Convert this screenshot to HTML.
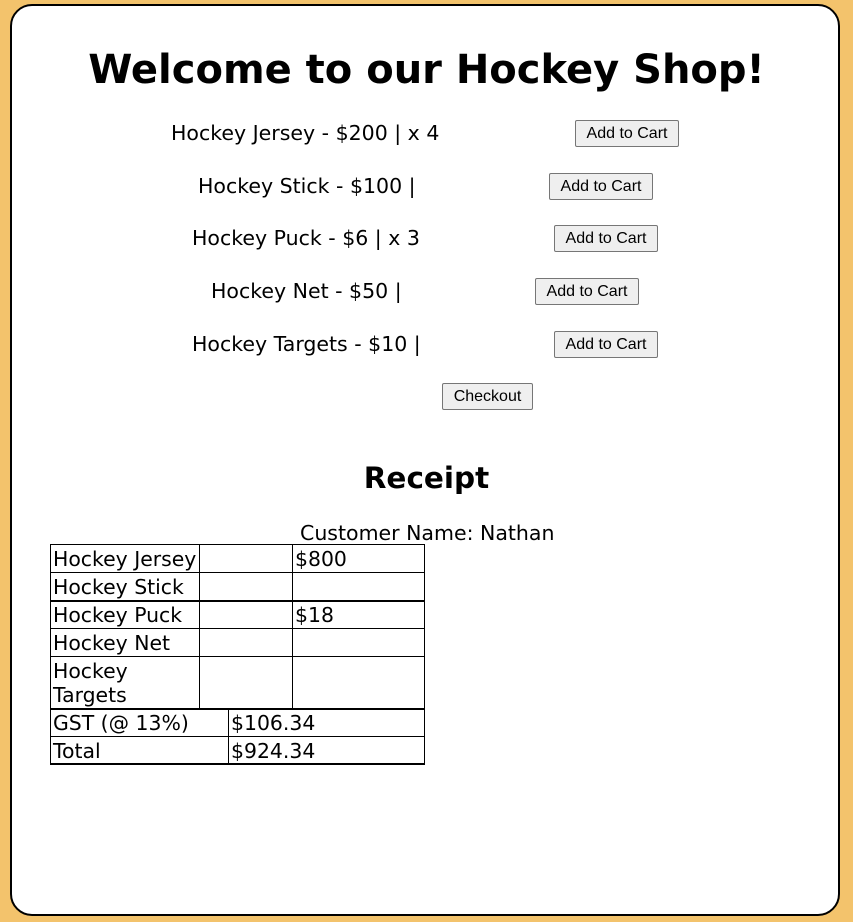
<!DOCTYPE html>
<html><head><style>
*{margin:0;padding:0;box-sizing:border-box}
body{width:853px;height:922px;background:#f3c36c;position:relative;overflow:hidden;font-family:"DejaVu Sans",Verdana,sans-serif;color:#000}
.card{position:absolute;left:10px;top:4px;width:830px;height:912px;background:#fff;border:2px solid #000;border-radius:22px}
.a{position:absolute;white-space:nowrap}
h1{position:absolute;left:0;width:853px;top:45px;text-align:center;font-size:40px;font-weight:bold;line-height:50px}
.t{font-size:20.5px;line-height:24px}
.btn{position:absolute;height:27px;background:#efefef;border:1px solid #767676;border-radius:2px;font-family:"Liberation Sans",Arial,sans-serif;font-size:16px;line-height:25px;text-align:center;color:#000}
.c{position:absolute;border:1px solid #000;font-size:20.4px;line-height:24px;padding-left:2px;padding-top:2px;white-space:nowrap}
</style></head><body>
<div class="card"></div>
<h1>Welcome to our Hockey Shop!</h1>
<div class="a t" style="left:171px;top:121px">Hockey Jersey - $200 | x 4</div>
<div class="btn" style="left:575px;top:120px;width:104px">Add to Cart</div>
<div class="a t" style="left:198px;top:174px">Hockey Stick - $100 |</div>
<div class="btn" style="left:549px;top:173px;width:104px">Add to Cart</div>
<div class="a t" style="left:192px;top:226px">Hockey Puck - $6 | x 3</div>
<div class="btn" style="left:554px;top:225px;width:104px">Add to Cart</div>
<div class="a t" style="left:211px;top:279px">Hockey Net - $50 |</div>
<div class="btn" style="left:535px;top:278px;width:104px">Add to Cart</div>
<div class="a t" style="left:192px;top:332px">Hockey Targets - $10 |</div>
<div class="btn" style="left:554px;top:331px;width:104px">Add to Cart</div>
<div class="btn" style="left:442px;top:383px;width:91px">Checkout</div>
<div class="a" style="left:0;width:853px;text-align:center;top:461px;font-size:29.5px;font-weight:bold;line-height:34px">Receipt</div>
<div class="a t" style="left:300px;top:521px">Customer Name: Nathan</div>

<div class="c" style="left:50px;top:544px;width:150px;height:29px">Hockey Jersey</div>
<div class="c" style="left:199px;top:544px;width:94px;height:29px"></div>
<div class="c" style="left:292px;top:544px;width:133px;height:29px">$800</div>
<div class="c" style="left:50px;top:572px;width:150px;height:29px">Hockey Stick</div>
<div class="c" style="left:199px;top:572px;width:94px;height:29px"></div>
<div class="c" style="left:292px;top:572px;width:133px;height:29px"></div>
<div class="c" style="left:50px;top:600px;width:150px;height:29px;border-top-width:2px;padding-top:1px">Hockey Puck</div>
<div class="c" style="left:199px;top:600px;width:94px;height:29px;border-top-width:2px"></div>
<div class="c" style="left:292px;top:600px;width:133px;height:29px;border-top-width:2px;padding-top:1px">$18</div>
<div class="c" style="left:50px;top:628px;width:150px;height:29px">Hockey Net</div>
<div class="c" style="left:199px;top:628px;width:94px;height:29px"></div>
<div class="c" style="left:292px;top:628px;width:133px;height:29px"></div>
<div class="c" style="left:50px;top:656px;width:150px;height:53px">Hockey<br>Targets</div>
<div class="c" style="left:199px;top:656px;width:94px;height:53px"></div>
<div class="c" style="left:292px;top:656px;width:133px;height:53px"></div>
<div class="c" style="left:50px;top:708px;width:179px;height:29px;border-top-width:2px;padding-top:1px">GST (@ 13%)</div>
<div class="c" style="left:228px;top:708px;width:197px;height:29px;border-top-width:2px;padding-top:1px">$106.34</div>
<div class="c" style="left:50px;top:736px;width:179px;height:29px;border-bottom-width:2px">Total</div>
<div class="c" style="left:228px;top:736px;width:197px;height:29px;border-bottom-width:2px">$924.34</div>
</body></html>
